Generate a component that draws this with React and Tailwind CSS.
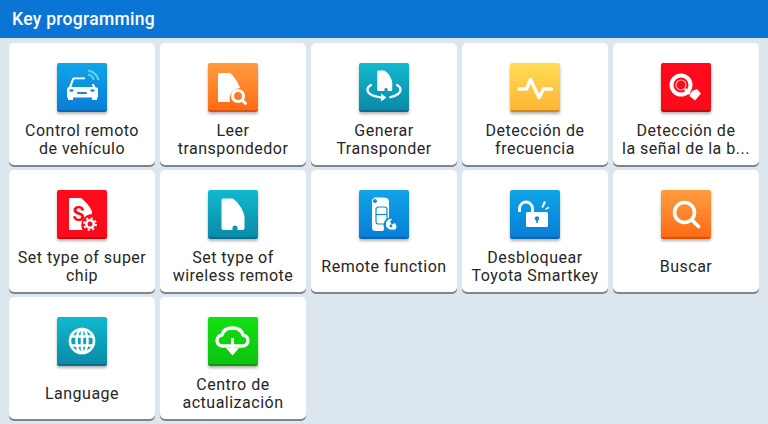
import React from 'react';

const blue = 'from-[#10a5e8] to-[#0a7ed6] border-[#0868b0]';
const orange = 'from-[#ff9c3e] to-[#ff6a12] border-[#d9540a]';
const teal = 'from-[#10b9cf] to-[#0a8ba8] border-[#07708a]';
const yellow = 'from-[#ffdc55] to-[#fdb535] border-[#d08a1c]';
const red = 'from-[#ff0a1c] to-[#fb0a1a] border-[#c90812]';
const green = 'from-[#12e012] to-[#0cc40e] border-[#0a9c0c]';

// key-shaped blank used by the transponder icons
const blank = 'M15.500 8.500h9c5 3 11 11 12 18v11.500c0 1.200-.8 2-2 2h-5v-2c0-3.500-5-3.500-5 0v2h-9c-1.200 0-2-.8-2-2v-28c0-1 .8-1.500 2-1.500z';

const CarIcon = () => (
    <>
        <path d="M10 25l2-1 3-8c.4-1 1-1.500 2-1.500h11v1.800h-10c-.6 0-1 .3-1.200.8l-2.500 7h21.500l-1-3h2l1.700 3.200 2.500.7v9.500h-1v2.500h-5v-2.500h-19v2.500h-5v-2.500h-1z" fill="#fff" />
        <rect x="20" y="29" width="10" height="2" rx="1" fill="#0c8bdc" />
        <ellipse cx="14.500" cy="27.500" rx="2.200" ry="1.300" fill="#0c8bdc" />
        <ellipse cx="35.500" cy="27.500" rx="2.200" ry="1.300" fill="#0c8bdc" />
        <path d="M31 7.500c5 .6 9.500 4.500 10.500 9.500M31 11.500c2.800.4 5 2.500 5.800 5.500" fill="none" stroke="#5fd0ec" strokeWidth="2.200" />
    </>
);

const ReadIcon = () => (
    <>
        <path d="M11 10h11c4 3 9 11 10 15v0a11 11 0 0 0-10 14h-11c-.6 0-1-.5-1-1v-27c0-.6.5-1 1-1z" fill="#fff" />
        <circle cx="30" cy="33" r="5.500" fill="none" stroke="#fff" strokeWidth="3.200" />
        <path d="M34.500 37.500l3 2.800" stroke="#fff" strokeWidth="3" strokeLinecap="round" />
    </>
);

const GenerateIcon = () => (
    <>
        <path d={blank} fill="#fff" transform="translate(9.500 2) scale(0.65)" />
        <path d="M12 22c-4 2-5 6-1 9 3 2 7 3 11 3.500M38 22c4 2 5 6 1 9-2 1.500-5 2.500-8 3.200" fill="none" stroke="#fff" strokeWidth="2.200" strokeLinecap="round" />
        <path d="M22 30.500l5.500 4-5.500 4z" fill="#fff" />
    </>
);

const FrequencyIcon = () => (
    <path d="M9 26h7.500l4-9.500 8.500 18 4.500-8.500h8" fill="none" stroke="#fff" strokeWidth="3.400" strokeLinecap="round" strokeLinejoin="round" />
);

const SignalIcon = () => (
    <>
        <circle cx="20" cy="22" r="9.500" fill="none" stroke="#fff" strokeWidth="4" />
        <circle cx="20" cy="22" r="5" fill="none" stroke="#ffb0b4" strokeWidth="1.200" />
        <path d="M24 26l5 5" stroke="#fff" strokeWidth="2.500" />
        <path d="M31 28l5-2 4 4.500-6 7-5.500-4.500z" fill="#fff" />
    </>
);

const SuperChipIcon = () => (
    <>
        <path d="M13 8h11c4 3 10 9 11 14v2a11 11 0 0 0-9.500 16h-12.500c-.6 0-1-.5-1-1v-30c0-.6.500-1 1-1z" fill="#fff" />
        <text x="15.500" y="31" fontSize="20" fontWeight="700" fontFamily="Roboto, sans-serif" fill="#fb0a1a">S</text>
        <circle cx="33" cy="34" r="3.800" fill="none" stroke="#fff" strokeWidth="2.600" />
        <circle cx="33" cy="34" r="6" fill="none" stroke="#fff" strokeWidth="1.800" strokeDasharray="2.200 2.500" />
    </>
);

const WirelessIcon = () => <path d={blank} fill="#fff" />;

const RemoteIcon = () => (
    <>
        <path d="M13 9.500l3-2h8c4 0 6 1.500 6 4v20l-6 9.500h-7c-2.500 0-4-1-4-3z" fill="#fff" />
        <circle cx="16" cy="11" r="2" fill="#0c8bdc" />
        <rect x="17" y="17" width="11" height="17" rx="2.500" fill="none" stroke="#0c8bdc" strokeWidth="1.200" />
        <path d="M17 24.500h11" stroke="#0c8bdc" strokeWidth="1.200" />
        <circle cx="32" cy="35" r="7.500" fill="#0c8bdc" />
        <path d="M27 33a5 5 0 0 1 6-4l-2 3 2 2.500 3-1.500 1.500 3.500-1 3h-6l-3.500-3z" fill="#fff" />
        <circle cx="32" cy="36" r="1.400" fill="#0c8bdc" />
    </>
);

const UnlockIcon = () => (
    <>
        <path d="M9.500 22v-3.500a6.500 6.500 0 0 1 13 0v3.500" fill="none" stroke="#fff" strokeWidth="2.800" />
        <rect x="16" y="22" width="22" height="15" rx="1.500" fill="#fff" />
        <circle cx="27" cy="28.500" r="2.200" fill="#0c8bdc" />
        <rect x="26.200" y="29" width="1.600" height="4" fill="#0c8bdc" />
        <path d="M31.500 17l2.500-6 2 1-3 6zM35 19l3.500-2.500 1 1.500-4 2z" fill="#fff" />
    </>
);

const SearchIcon = () => (
    <>
        <circle cx="23.500" cy="22.500" r="10" fill="none" stroke="#fff" strokeWidth="3.600" />
        <path d="M31 30l6.500 6.500" stroke="#fff" strokeWidth="3.800" strokeLinecap="round" />
    </>
);

const GlobeIcon = () => (
    <g fill="none" stroke="#fff" strokeWidth="2.600">
        <circle cx="25" cy="24" r="12" />
        <ellipse cx="25" cy="24" rx="5.500" ry="12" />
        <path d="M25 12v24M14 19.500h22M14 28.500h22" />
    </g>
);

const CloudIcon = () => (
    <>
        <path d="M15 29a5.500 5.500 0 0 1-1-11c1-4.500 5-7 10.500-7s9.500 2.500 10.500 7a5.500 5.500 0 0 1-1 11h-18z" fill="none" stroke="#fff" strokeWidth="3.400" strokeLinejoin="round" />
        <path d="M24.500 21v11" stroke="#fff" strokeWidth="3" />
        <path d="M18 31h13l-6.500 7.500z" fill="#fff" />
    </>
);

const items = [
    { label: ['Control remoto', 'de vehículo'], color: blue, Icon: CarIcon },
    { label: ['Leer', 'transpondedor'], color: orange, Icon: ReadIcon },
    { label: ['Generar', 'Transponder'], color: teal, Icon: GenerateIcon },
    { label: ['Detección de', 'frecuencia'], color: yellow, Icon: FrequencyIcon },
    { label: ['Detección de', 'la señal de la b...'], color: red, Icon: SignalIcon },
    { label: ['Set type of super', 'chip'], color: red, Icon: SuperChipIcon },
    { label: ['Set type of', 'wireless remote'], color: teal, Icon: WirelessIcon },
    { label: ['Remote function'], color: blue, Icon: RemoteIcon },
    { label: ['Desbloquear', 'Toyota Smartkey'], color: blue, Icon: UnlockIcon },
    { label: ['Buscar'], color: orange, Icon: SearchIcon },
    { label: ['Language'], color: teal, Icon: GlobeIcon },
    { label: ['Centro de', 'actualización'], color: green, Icon: CloudIcon },
];

const Tile = ({ label, color, Icon }) => (
    <div className="h-[122px] flex flex-col items-center rounded-[5px] bg-white shadow-[0_2px_0_#7f8589]">
        <div className={`mt-5 w-[50px] h-[49px] shrink-0 rounded-[2px] bg-gradient-to-b border-b-2 shadow-[0_2px_3px_rgba(0,0,0,0.3)] ${color}`}>
            <svg width="50" height="49" viewBox="0 0 50 49"><Icon /></svg>
        </div>
        <div className="mt-[10px] h-9 flex flex-col justify-center text-center text-[16px] leading-[18px] tracking-[0.5px] text-[#262626] whitespace-nowrap">
            {label.map((line) => <span key={line}>{line}</span>)}
        </div>
    </div>
);

export default function App() {
    return (
        <div className="w-[768px] h-[424px] overflow-hidden bg-[#dce6ee] font-['Roboto',sans-serif]">
            <div className="h-[38px] flex items-center pl-3 bg-[#0b75d6] text-white text-[17.5px] font-medium tracking-[0.3px]">
                Key programming
            </div>
            <div className="grid grid-cols-5 gap-[5px] px-[9px] pt-[5px]">
                {items.map((item) => <Tile key={item.label.join(' ')} {...item} />)}
            </div>
        </div>
    );
}
